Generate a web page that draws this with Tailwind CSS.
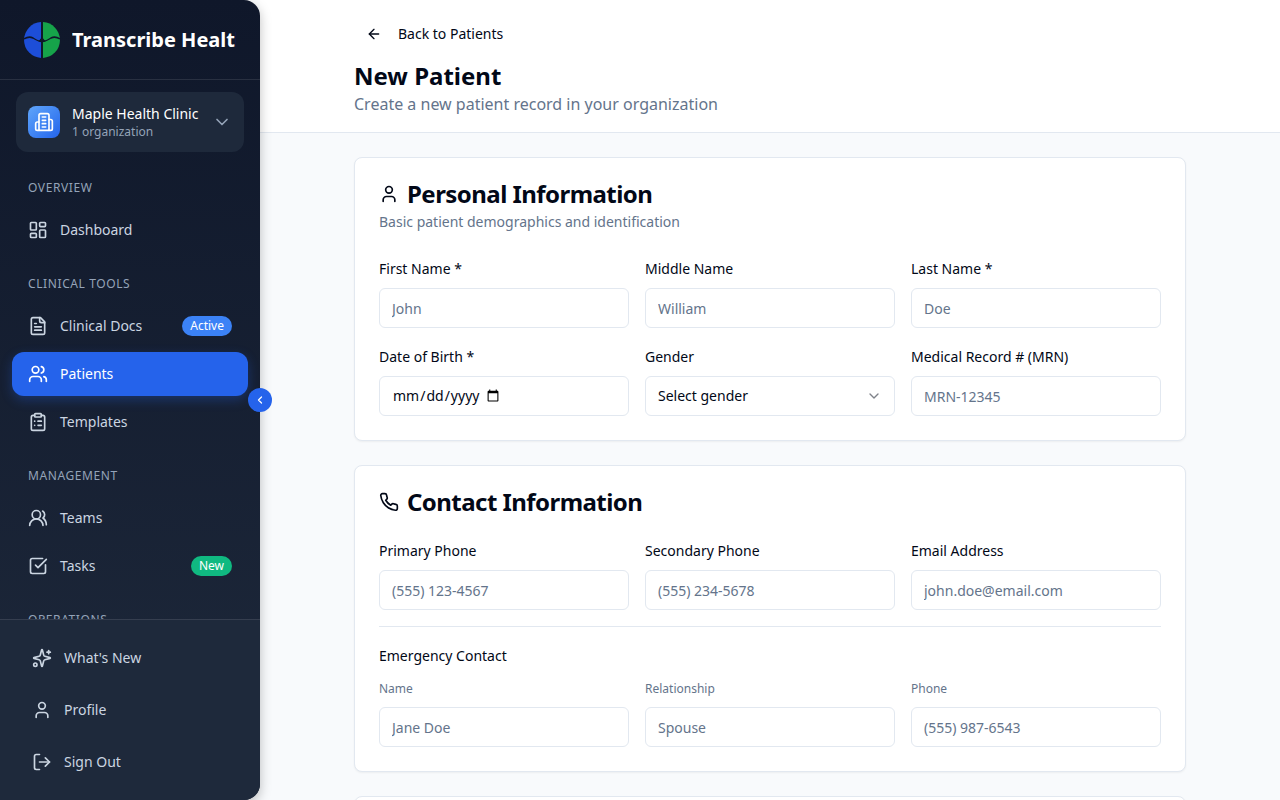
<!DOCTYPE html>
<html lang="en">
<head>
    <meta charset="UTF-8">
    <meta name="viewport" content="width=device-width, initial-scale=1.0">
    <title>New Patient</title>
    <script src="https://cdn.jsdelivr.net/npm/@tailwindcss/browser@4"></script>
</head>
<body class="h-screen overflow-hidden bg-[#f8fafc] font-['Noto_Sans',sans-serif] text-[#020817]">
<div class="flex h-screen">

    <!-- sidebar -->
    <aside class="relative z-10 flex h-screen w-[260px] shrink-0 flex-col rounded-r-2xl bg-gradient-to-b from-[#0f172a] to-[#1e293b] shadow-[0_4px_12px_rgba(0,0,0,0.25)]">
        <div class="flex h-20 shrink-0 items-center gap-3 border-b border-white/10 px-6">
            <svg class="h-9 w-9 shrink-0" viewBox="0 0 36 36">
                <path d="M17 0.030A18 18 0 0 0 17 35.970Z" fill="#1d4ed8"/>
                <path d="M19 0.030A18 18 0 0 1 19 35.970Z" fill="#16a34a"/>
                <path d="M0 17C3 15 6 14.500 9 16C12 18 14 19 16 19L18 17L20 19C22 19 24 18 27 16C30 14.500 33 15 36 17" fill="none" stroke="#0f172a" stroke-width="1.500"/>
                <path d="M14.500 19.500L18 15L21.500 19.500L18 20.500Z" fill="#0f172a"/>
            </svg>
            <span class="overflow-hidden whitespace-nowrap text-xl font-bold text-white">Transcribe Health</span>
        </div>

        <div class="min-h-0 flex-1 overflow-hidden">
            <div class="px-4 pt-3">
                <div class="flex h-[60px] items-center gap-3 rounded-xl bg-[#1e293b] px-3">
                    <div class="flex h-8 w-8 shrink-0 items-center justify-center rounded-lg bg-gradient-to-br from-[#60a5fa] to-[#2563eb]">
                        <svg class="h-5 w-5 text-white" fill="none" stroke="currentColor" stroke-width="2" stroke-linecap="round" stroke-linejoin="round" viewBox="0 0 24 24"><path d="M6 22V4a2 2 0 0 1 2-2h8a2 2 0 0 1 2 2v18Z"/><path d="M6 12H4a2 2 0 0 0-2 2v6a2 2 0 0 0 2 2h2"/><path d="M18 9h2a2 2 0 0 1 2 2v9a2 2 0 0 1-2 2h-2"/><path d="M10 6h4"/><path d="M10 10h4"/><path d="M10 14h4"/><path d="M10 18h4"/></svg>
                    </div>
                    <div class="min-w-0 flex-1">
                        <div class="truncate text-sm leading-5 text-white">Maple Health Clinic</div>
                        <div class="truncate text-xs leading-4 text-[#94a3b8]">1 organization</div>
                    </div>
                    <svg class="h-5 w-5 shrink-0 text-[#94a3b8]" fill="none" stroke="currentColor" stroke-width="2" stroke-linecap="round" stroke-linejoin="round" viewBox="0 0 24 24"><path d="m6 9 6 6 6-6"/></svg>
                </div>
            </div>

            <nav class="px-3 pt-[28px]">
                <h3 class="mb-3 px-4 text-xs leading-4 tracking-wider text-[#94a3b8] uppercase">Overview</h3>
                <a class="flex h-11 items-center gap-3 rounded-xl px-4 text-sm text-[#cbd5e1]">
                    <svg class="h-5 w-5" fill="none" stroke="currentColor" stroke-width="2" stroke-linecap="round" stroke-linejoin="round" viewBox="0 0 24 24"><rect width="7" height="9" x="3" y="3" rx="1"/><rect width="7" height="5" x="14" y="3" rx="1"/><rect width="7" height="9" x="14" y="12" rx="1"/><rect width="7" height="5" x="3" y="16" rx="1"/></svg>
                    Dashboard
                </a>

                <h3 class="mt-[24px] mb-3 px-4 text-xs leading-4 tracking-wider text-[#94a3b8] uppercase">Clinical Tools</h3>
                <div class="flex flex-col gap-1">
                    <a class="flex h-11 items-center gap-3 rounded-xl px-4 text-sm text-[#cbd5e1]">
                        <svg class="h-5 w-5" fill="none" stroke="currentColor" stroke-width="2" stroke-linecap="round" stroke-linejoin="round" viewBox="0 0 24 24"><path d="M15 2H6a2 2 0 0 0-2 2v16a2 2 0 0 0 2 2h12a2 2 0 0 0 2-2V7Z"/><path d="M14 2v4a2 2 0 0 0 2 2h4"/><path d="M10 9H8"/><path d="M16 13H8"/><path d="M16 17H8"/></svg>
                        Clinical Docs
                        <span class="ml-auto rounded-full bg-[#3b82f6] px-2 py-0.5 text-xs leading-4 text-white">Active</span>
                    </a>
                    <a class="flex h-11 items-center gap-3 rounded-xl bg-[#2563eb] px-4 text-sm text-white shadow-[0_4px_12px_rgba(37,99,235,0.3)]">
                        <svg class="h-5 w-5" fill="none" stroke="currentColor" stroke-width="2" stroke-linecap="round" stroke-linejoin="round" viewBox="0 0 24 24"><path d="M16 21v-2a4 4 0 0 0-4-4H6a4 4 0 0 0-4 4v2"/><circle cx="9" cy="7" r="4"/><path d="M22 21v-2a4 4 0 0 0-3-3.870"/><path d="M16 3.130a4 4 0 0 1 0 7.750"/></svg>
                        Patients
                    </a>
                    <a class="flex h-11 items-center gap-3 rounded-xl px-4 text-sm text-[#cbd5e1]">
                        <svg class="h-5 w-5" fill="none" stroke="currentColor" stroke-width="2" stroke-linecap="round" stroke-linejoin="round" viewBox="0 0 24 24"><rect width="8" height="4" x="8" y="2" rx="1"/><path d="M16 4h2a2 2 0 0 1 2 2v14a2 2 0 0 1-2 2H6a2 2 0 0 1-2-2V6a2 2 0 0 1 2-2h2"/><path d="M12 11h4"/><path d="M12 16h4"/><path d="M8 11h.010"/><path d="M8 16h.010"/></svg>
                        Templates
                    </a>
                </div>

                <h3 class="mt-[24px] mb-3 px-4 text-xs leading-4 tracking-wider text-[#94a3b8] uppercase">Management</h3>
                <div class="flex flex-col gap-1">
                    <a class="flex h-11 items-center gap-3 rounded-xl px-4 text-sm text-[#cbd5e1]">
                        <svg class="h-5 w-5" fill="none" stroke="currentColor" stroke-width="2" stroke-linecap="round" stroke-linejoin="round" viewBox="0 0 24 24"><path d="M18 21a8 8 0 0 0-16 0"/><circle cx="10" cy="8" r="5"/><path d="M22 20c0-3.370-2-6.500-4-8a5 5 0 0 0-.450-8.300"/></svg>
                        Teams
                    </a>
                    <a class="flex h-11 items-center gap-3 rounded-xl px-4 text-sm text-[#cbd5e1]">
                        <svg class="h-5 w-5" fill="none" stroke="currentColor" stroke-width="2" stroke-linecap="round" stroke-linejoin="round" viewBox="0 0 24 24"><path d="M21 10.500V19a2 2 0 0 1-2 2H5a2 2 0 0 1-2-2V5a2 2 0 0 1 2-2h12.500"/><path d="m9 11 3 3L22 4"/></svg>
                        Tasks
                        <span class="ml-auto rounded-full bg-[#10b981] px-2 py-0.5 text-xs leading-4 text-white">New</span>
                    </a>
                </div>

                <h3 class="mt-[24px] mb-3 px-4 text-xs leading-4 tracking-wider text-[#94a3b8] uppercase">Operations</h3>
            </nav>
        </div>

        <div class="flex shrink-0 flex-col gap-1 border-t border-white/10 bg-[#1e293b] rounded-br-2xl px-3 pt-[14px] pb-[14px]">
            <a class="flex h-12 items-center gap-3 rounded-xl px-5 text-sm text-[#cbd5e1]">
                <svg class="h-5 w-5" fill="none" stroke="currentColor" stroke-width="2" stroke-linecap="round" stroke-linejoin="round" viewBox="0 0 24 24"><path d="M9.937 15.500A2 2 0 0 0 8.500 14.063l-6.135-1.582a.5.5 0 0 1 0-.962L8.500 9.936A2 2 0 0 0 9.937 8.500l1.582-6.135a.5.5 0 0 1 .963 0L14.063 8.500A2 2 0 0 0 15.500 9.937l6.135 1.581a.5.5 0 0 1 0 .964L15.500 14.063a2 2 0 0 0-1.437 1.437l-1.582 6.135a.5.5 0 0 1-.963 0z"/><path d="M20 3v4"/><path d="M22 5h-4"/><circle cx="4" cy="20" r="2"/></svg>
                What's New
            </a>
            <a class="flex h-12 items-center gap-3 rounded-xl px-5 text-sm text-[#cbd5e1]">
                <svg class="h-5 w-5" fill="none" stroke="currentColor" stroke-width="2" stroke-linecap="round" stroke-linejoin="round" viewBox="0 0 24 24"><path d="M19 21v-2a4 4 0 0 0-4-4H9a4 4 0 0 0-4 4v2"/><circle cx="12" cy="7" r="4"/></svg>
                Profile
            </a>
            <a class="flex h-12 items-center gap-3 rounded-xl px-5 text-sm text-[#cbd5e1]">
                <svg class="h-5 w-5" fill="none" stroke="currentColor" stroke-width="2" stroke-linecap="round" stroke-linejoin="round" viewBox="0 0 24 24"><path d="M9 21H5a2 2 0 0 1-2-2V5a2 2 0 0 1 2-2h4"/><path d="m16 17 5-5-5-5"/><path d="M21 12H9"/></svg>
                Sign Out
            </a>
        </div>

        <!-- collapse toggle -->
        <button class="absolute top-[388px] -right-3 flex h-6 w-6 items-center justify-center rounded-full bg-[#2563eb] text-white">
            <svg class="h-3 w-3" fill="none" stroke="currentColor" stroke-width="2.500" stroke-linecap="round" stroke-linejoin="round" viewBox="0 0 24 24"><path d="m15 18-6-6 6-6"/></svg>
        </button>
    </aside>

    <!-- main -->
    <main class="min-w-0 flex-1 overflow-hidden">
        <header class="h-[133px] border-b border-[#e2e8f0] bg-white">
            <div class="mx-auto w-[832px] pt-3.5">
                <a class="flex h-10 w-fit items-center gap-4 px-3 text-sm">
                    <svg class="h-4 w-4" fill="none" stroke="currentColor" stroke-width="2" stroke-linecap="round" stroke-linejoin="round" viewBox="0 0 24 24"><path d="m12 19-7-7 7-7"/><path d="M19 12H5"/></svg>
                    Back to Patients
                </a>
                <h1 class="mt-1.5 text-2xl leading-8 font-bold">New Patient</h1>
                <p class="text-base leading-6 text-[#64748b]">Create a new patient record in your organization</p>
            </div>
        </header>

        <div class="mx-auto flex w-[832px] flex-col gap-6 pt-6">

            <!-- Personal Information -->
            <section class="rounded-lg border border-[#e2e8f0] bg-white p-6 shadow-[0_1px_2px_rgba(0,0,0,0.05)]">
                <h2 class="flex items-center gap-2 text-2xl leading-6 font-bold tracking-[-0.55px]">
                    <svg class="h-5 w-5" fill="none" stroke="currentColor" stroke-width="2" stroke-linecap="round" stroke-linejoin="round" viewBox="0 0 24 24"><path d="M19 21v-2a4 4 0 0 0-4-4H9a4 4 0 0 0-4 4v2"/><circle cx="12" cy="7" r="4"/></svg>
                    Personal Information
                </h2>
                <p class="mt-1.5 text-sm leading-5 text-[#64748b]">Basic patient demographics and identification</p>
                <div class="mt-[27px] grid grid-cols-3 gap-x-4 gap-y-[19px]">
                    <div>
                        <label class="mb-[9px] block text-sm leading-5">First Name *</label>
                        <input type="text" placeholder="John" class="flex h-10 w-full rounded-md border border-[#e2e8f0] bg-white px-3 text-sm placeholder:text-[#64748b]">
                    </div>
                    <div>
                        <label class="mb-[9px] block text-sm leading-5">Middle Name</label>
                        <input type="text" placeholder="William" class="flex h-10 w-full rounded-md border border-[#e2e8f0] bg-white px-3 text-sm placeholder:text-[#64748b]">
                    </div>
                    <div>
                        <label class="mb-[9px] block text-sm leading-5">Last Name *</label>
                        <input type="text" placeholder="Doe" class="flex h-10 w-full rounded-md border border-[#e2e8f0] bg-white px-3 text-sm placeholder:text-[#64748b]">
                    </div>
                    <div>
                        <label class="mb-[9px] block text-sm leading-5">Date of Birth *</label>
                        <input type="date" class="flex h-10 w-full rounded-md border border-[#e2e8f0] bg-white px-3 text-sm [&::-webkit-calendar-picker-indicator]:-ml-4">
                    </div>
                    <div>
                        <label class="mb-[9px] block text-sm leading-5">Gender</label>
                        <button class="flex h-10 w-full items-center justify-between rounded-md border border-[#e2e8f0] bg-white px-3 text-sm">
                            Select gender
                            <svg class="h-4 w-4 opacity-50" fill="none" stroke="currentColor" stroke-width="2" stroke-linecap="round" stroke-linejoin="round" viewBox="0 0 24 24"><path d="m6 9 6 6 6-6"/></svg>
                        </button>
                    </div>
                    <div>
                        <label class="mb-[9px] block text-sm leading-5">Medical Record # (MRN)</label>
                        <input type="text" placeholder="MRN-12345" class="flex h-10 w-full rounded-md border border-[#e2e8f0] bg-white px-3 text-sm placeholder:text-[#64748b]">
                    </div>
                </div>
            </section>

            <!-- Contact Information -->
            <section class="rounded-lg border border-[#e2e8f0] bg-white p-6 shadow-[0_1px_2px_rgba(0,0,0,0.05)]">
                <h2 class="flex items-center gap-2 text-2xl leading-6 font-bold tracking-[-0.55px]">
                    <svg class="h-5 w-5" fill="none" stroke="currentColor" stroke-width="2" stroke-linecap="round" stroke-linejoin="round" viewBox="0 0 24 24"><path d="M22 16.920v3a2 2 0 0 1-2.180 2 19.790 19.790 0 0 1-8.630-3.070 19.500 19.500 0 0 1-6-6 19.790 19.790 0 0 1-3.070-8.670A2 2 0 0 1 4.110 2h3a2 2 0 0 1 2 1.720 12.840 12.840 0 0 0 .7 2.810 2 2 0 0 1-.45 2.110L8.090 9.910a16 16 0 0 0 6 6l1.270-1.270a2 2 0 0 1 2.110-.45 12.840 12.840 0 0 0 2.810.7A2 2 0 0 1 22 16.920z"/></svg>
                    Contact Information
                </h2>
                <div class="mt-[27px] grid grid-cols-3 gap-x-4">
                    <div>
                        <label class="mb-[9px] block text-sm leading-5">Primary Phone</label>
                        <input type="text" placeholder="(555) 123-4567" class="flex h-10 w-full rounded-md border border-[#e2e8f0] bg-white px-3 text-sm placeholder:text-[#64748b]">
                    </div>
                    <div>
                        <label class="mb-[9px] block text-sm leading-5">Secondary Phone</label>
                        <input type="text" placeholder="(555) 234-5678" class="flex h-10 w-full rounded-md border border-[#e2e8f0] bg-white px-3 text-sm placeholder:text-[#64748b]">
                    </div>
                    <div>
                        <label class="mb-[9px] block text-sm leading-5">Email Address</label>
                        <input type="text" placeholder="john.doe@email.com" class="flex h-10 w-full rounded-md border border-[#e2e8f0] bg-white px-3 text-sm placeholder:text-[#64748b]">
                    </div>
                </div>
                <div class="mt-4 border-t border-[#e2e8f0] pt-[19px]">
                    <h4 class="text-sm leading-5">Emergency Contact</h4>
                    <div class="mt-[15px] grid grid-cols-3 gap-x-4">
                        <div>
                            <label class="mb-[10px] block text-xs leading-4 text-[#64748b]">Name</label>
                            <input type="text" placeholder="Jane Doe" class="flex h-10 w-full rounded-md border border-[#e2e8f0] bg-white px-3 text-sm placeholder:text-[#64748b]">
                        </div>
                        <div>
                            <label class="mb-[10px] block text-xs leading-4 text-[#64748b]">Relationship</label>
                            <input type="text" placeholder="Spouse" class="flex h-10 w-full rounded-md border border-[#e2e8f0] bg-white px-3 text-sm placeholder:text-[#64748b]">
                        </div>
                        <div>
                            <label class="mb-[10px] block text-xs leading-4 text-[#64748b]">Phone</label>
                            <input type="text" placeholder="(555) 987-6543" class="flex h-10 w-full rounded-md border border-[#e2e8f0] bg-white px-3 text-sm placeholder:text-[#64748b]">
                        </div>
                    </div>
                </div>
            </section>

            <section class="h-40 rounded-lg border border-[#e2e8f0] bg-white shadow-[0_1px_2px_rgba(0,0,0,0.05)]"></section>
        </div>
    </main>
</div>
</body>
</html>
